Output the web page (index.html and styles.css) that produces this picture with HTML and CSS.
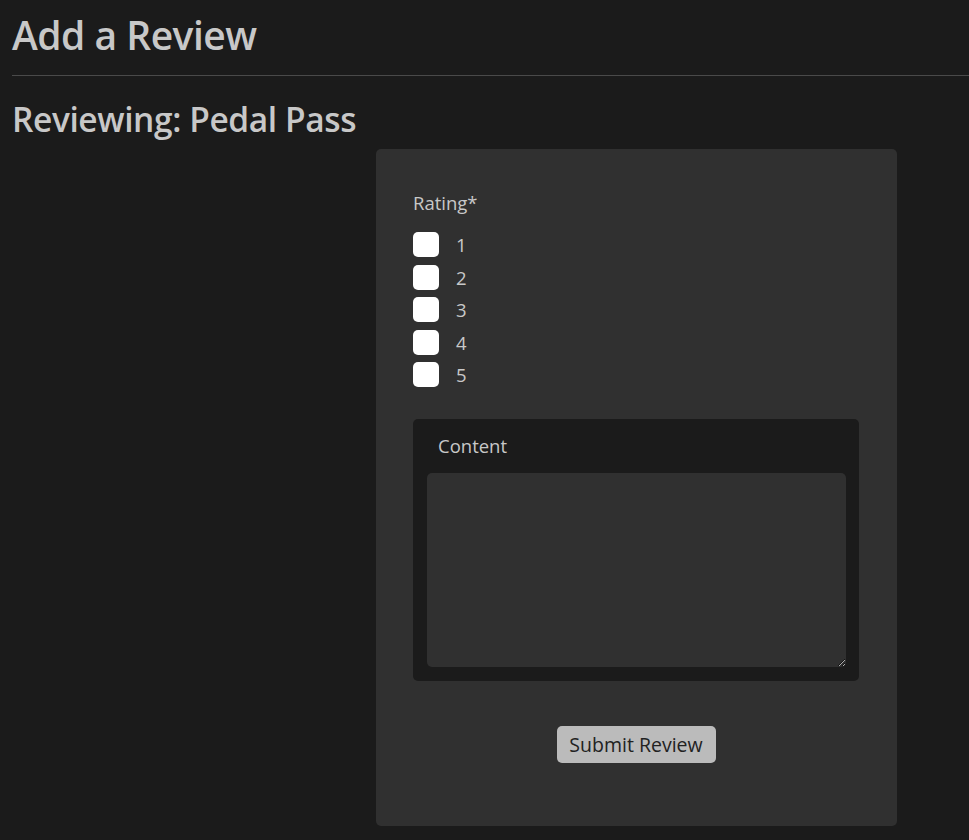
FILE: index.html
```html
<!DOCTYPE html>
<html lang="en">
<head>
<meta charset="utf-8">
<title>Add a Review</title>
<link rel="stylesheet" href="styles.css">
</head>
<body>
<main class="page">
  <h1 class="title">Add a Review</h1>
  <hr class="rule">
  <h2 class="subtitle">Reviewing: Pedal Pass</h2>
  <form class="card">
    <div class="rating">
      <div class="rating-label">Rating*</div>
      <label class="opt"><input type="checkbox" class="box"><span>1</span></label>
      <label class="opt"><input type="checkbox" class="box"><span>2</span></label>
      <label class="opt"><input type="checkbox" class="box"><span>3</span></label>
      <label class="opt"><input type="checkbox" class="box"><span>4</span></label>
      <label class="opt"><input type="checkbox" class="box"><span>5</span></label>
    </div>
    <div class="content-box">
      <label class="content-label" for="content">Content</label>
      <textarea id="content" class="content-input"></textarea>
    </div>
    <button type="button" class="submit">Submit Review</button>
  </form>
</main>
</body>
</html>
```
FILE: styles.css
```css
html, body {
  margin: 0;
  padding: 0;
  background: #1b1b1b;
}
body {
  font-family: "Open Sans", "Noto Sans", sans-serif;
  color: #c8c8c8;
  overflow: hidden;
}
.page {
  padding-left: 12px;
  display: flex;
  flex-direction: column;
}
.title {
  margin: 10px 0 0 0;
  font-size: 39px;
  font-weight: 600;
  line-height: 50px;
  letter-spacing: -0.5px;
}
.rule {
  margin: 15px 0 0 0;
  border: 0;
  border-top: 1px solid #4a4a4a;
  height: 0;
}
.subtitle {
  margin: 23px 0 0 0;
  font-size: 33.5px;
  font-weight: 600;
  line-height: 40px;
  letter-spacing: -0.4px;
}
.card {
  margin: 10px 0 0 364px;
  width: 521px;
  height: 677px;
  box-sizing: border-box;
  background: #303030;
  border-radius: 5px;
  padding: 41px 38px 0 37px;
  display: flex;
  flex-direction: column;
}
.rating {
  display: flex;
  flex-direction: column;
}
.rating-label {
  font-size: 18.5px;
  line-height: 26px;
  margin-bottom: 16px;
}
.opt {
  display: flex;
  align-items: center;
  height: 25px;
  margin-bottom: 7.5px;
  font-size: 18.5px;
}
.box {
  appearance: none;
  -webkit-appearance: none;
  margin: 0;
  width: 26px;
  height: 25px;
  background: #fff;
  border-radius: 5px;
  border: 0;
}
.opt span {
  margin-left: 17px;
}
.content-box {
  margin-top: 24px;
  background: #1b1b1b;
  border-radius: 5px;
  padding: 12px 13px 14px 14px;
  display: flex;
  flex-direction: column;
}
.content-label {
  font-size: 18.5px;
  line-height: 30px;
  padding-left: 11px;
  margin-bottom: 12px;
}
.content-input {
  height: 194px;
  box-sizing: border-box;
  background: #303030;
  border: 0;
  border-radius: 5px;
  color: #c8c8c8;
  resize: vertical;
  outline: none;
  font-family: inherit;
}
.submit {
  align-self: center;
  margin-top: 45px;
  width: 159px;
  height: 37px;
  background: #bbbbbb;
  color: #222;
  border: 0;
  border-radius: 5px;
  font-family: inherit;
  font-size: 19.5px;
  padding: 0;
}
```
